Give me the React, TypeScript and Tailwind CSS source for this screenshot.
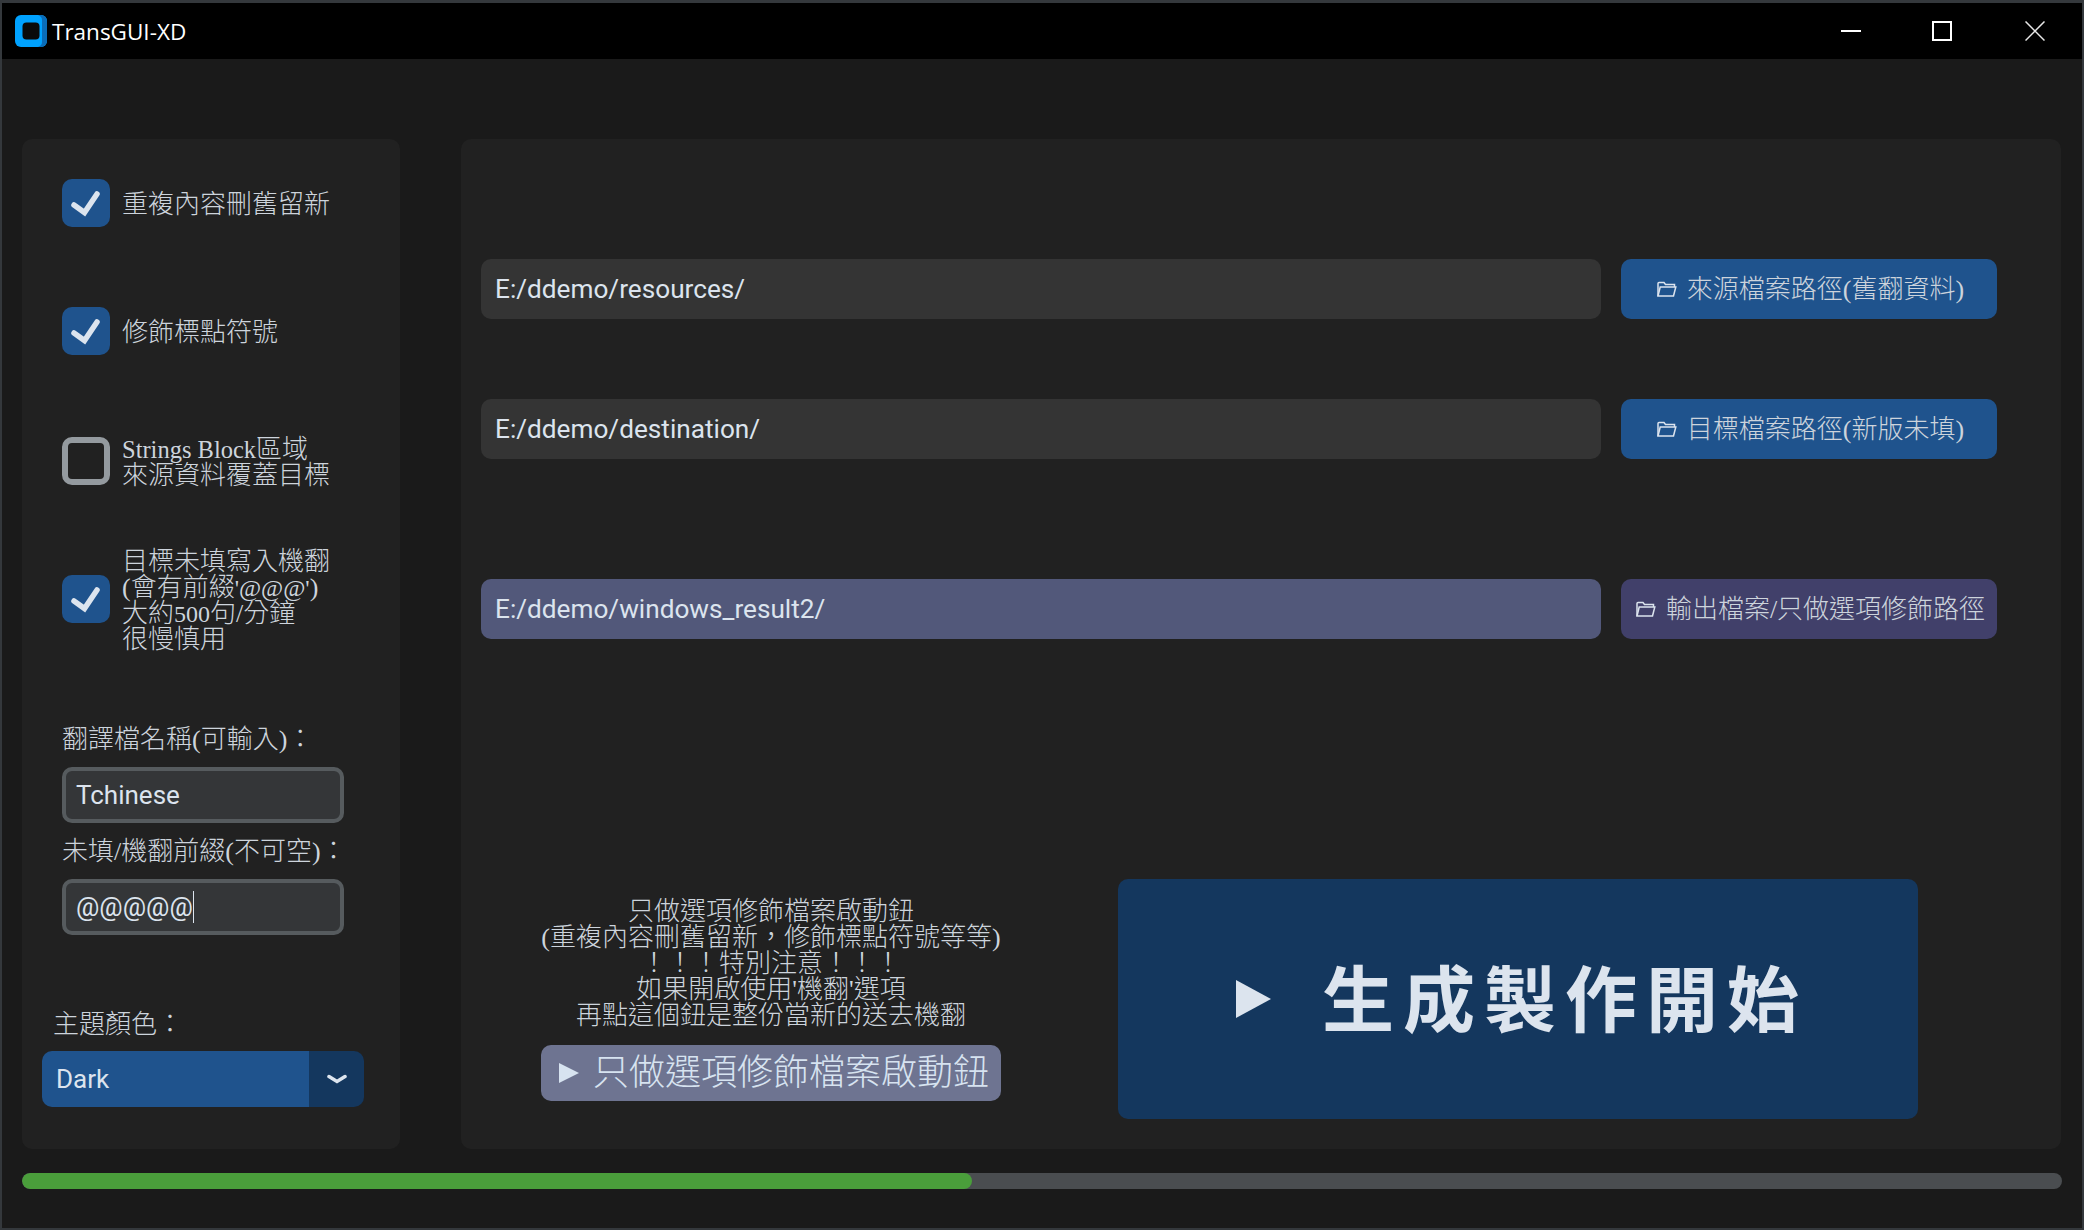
import type { ReactNode } from 'react'

const MING = "font-['Liberation_Serif','Noto_Sans_CJK_TC',serif] font-light"

function CheckBox({ checked }: { checked: boolean }) {
  if (!checked) {
    return <div className="w-[48px] h-[48px] shrink-0 rounded-[10px] border-[6px] border-[#949a9f]" />
  }
  return (
    <div className="w-[48px] h-[48px] shrink-0 rounded-[10px] bg-[#1f538d]">
      <svg width="48" height="48" viewBox="0 0 48 48" fill="none">
        <path d="M12 26l10.5 7.5L35 15" stroke="#dce4ee" strokeWidth="5.5" strokeLinecap="round" strokeLinejoin="miter" />
      </svg>
    </div>
  )
}

function Option({ checked, lines, className }: { checked: boolean; lines: ReactNode[]; className: string }) {
  return (
    <div className={`flex items-center gap-[12px] ${className}`}>
      <CheckBox checked={checked} />
      <div className={`${MING} pt-[2px] -mb-[2px] text-[26px] leading-[26px] text-[#cdd4dc] whitespace-nowrap`}>
        {lines.map((l, i) => (
          <div key={i}>{l}</div>
        ))}
      </div>
    </div>
  )
}

function FolderIcon() {
  return (
    <svg width="20" height="16" viewBox="0 0 20 16" fill="none" className="shrink-0" stroke="#dce4ee" strokeWidth="1.5">
      <path d="M1 15V2.5Q1 1.5 2 1.5H7L8.5 3.5H17.5V6" />
      <path d="M1 15H16.5L18.8 6H3.2L1 15Z" />
    </svg>
  )
}

function PathRow({ value, label, className, entryColor, buttonColor }: {
  value: string
  label: string
  className: string
  entryColor: string
  buttonColor: string
}) {
  return (
    <div className={`flex gap-[20px] pl-[20px] ${className}`}>
      <div className={`w-[1120px] h-[60px] rounded-[10px] flex items-center px-[14px] pt-[2px] font-['Roboto',sans-serif] text-[26.2px] text-[#dce4ee] ${entryColor}`}>
        {value}
      </div>
      <div className={`w-[376px] h-[60px] rounded-[10px] flex items-center justify-center gap-[10px] pl-[3px] ${MING} text-[26px] text-[#cdd4dc] whitespace-nowrap ${buttonColor}`}>
        <FolderIcon />
        {label}
      </div>
    </div>
  )
}

function TextBox({ value, caret }: { value: string; caret?: boolean }) {
  return (
    <div className="mt-[15px] ml-[40px] w-[282px] h-[56px] rounded-[10px] border-[4px] border-[#565b5e] bg-[#343638] flex items-center px-[10px] font-['Roboto',sans-serif] text-[26px] text-[#dce4ee]">
      {value}
      {caret && <span className="w-[1px] h-[32px] bg-[#dce4ee]" />}
    </div>
  )
}

export default function App() {
  return (
    <div lang="zh-TW" className="w-[2084px] h-[1230px] flex flex-col bg-[#1a1a1a] border-t-[3px] border-x-[2px] border-b-[2px] border-t-[#34383c] border-x-[#34383c] border-b-[#34383c] overflow-hidden">
      {/* Title bar */}
      <div className="h-[56px] shrink-0 bg-black flex items-center pl-[13px] pr-[37px]">
        <svg width="32" height="32" viewBox="0 0 32 32" className="shrink-0">
          <rect width="32" height="32" rx="6" fill="#00a2ff" />
          <path d="M23 0h3a6 6 0 0 1 6 6v20a6 6 0 0 1-6 6h-3c3-1 4-3 4-5V5c0-2-1-4-4-5z" fill="#0a6cb8" />
          <rect x="7.5" y="7.5" width="17" height="17" rx="4" fill="#0a0a0a" />
        </svg>
        <span className="ml-[5px] pt-[2px] font-['Open_Sans',sans-serif] text-[22.5px] text-white">TransGUI-XD</span>
        <div className="ml-auto flex items-center gap-[71px]">
          <svg width="20" height="20" viewBox="0 0 20 20"><path d="M0 10h20" stroke="#fff" strokeWidth="2" /></svg>
          <svg width="20" height="20" viewBox="0 0 20 20" className="mr-[2px]"><rect x="1" y="1" width="18" height="18" fill="none" stroke="#fff" strokeWidth="2" /></svg>
          <svg width="20" height="20" viewBox="0 0 20 20"><path d="M0.5 0.5l19 19M19.5 0.5l-19 19" stroke="#e8e8e8" strokeWidth="1.5" /></svg>
        </div>
      </div>

      <div className="flex gap-[61px] pl-[20px] pt-[80px]">
        {/* Left panel */}
        <div className="w-[378px] h-[1010px] rounded-[10px] bg-[#212121] flex flex-col">
          <Option className="ml-[40px] mt-[40px]" checked lines={['重複內容刪舊留新']} />
          <Option className="ml-[40px] mt-[80px]" checked lines={['修飾標點符號']} />
          <Option
            className="ml-[40px] mt-[80px]"
            checked={false}
            lines={[<><span className="text-[24.5px]">Strings Block</span>區域</>, '來源資料覆蓋目標']}
          />
          <Option
            className="ml-[40px] mt-[60px]"
            checked
            lines={[
              '目標未填寫入機翻',
              <>(會有前綴<span className="text-[24px]">'@@@'</span>)</>,
              <>大約<span className="text-[24px]">500</span>句/分鐘</>,
              '很慢慎用',
            ]}
          />

          <div className={`ml-[40px] mt-[76px] -mb-[1px] ${MING} text-[26px] leading-[26px] text-[#cdd4dc]`}>翻譯檔名稱(可輸入)：</div>
          <TextBox value="Tchinese" />
          <div className={`ml-[40px] mt-[16px] -mb-[1px] ${MING} text-[26px] leading-[26px] text-[#cdd4dc]`}>未填/機翻前綴(不可空)：</div>
          <TextBox value="@@@@@" caret />

          <div className={`ml-[31px] mt-[77px] ${MING} text-[26px] leading-[26px] text-[#cdd4dc]`}>主題顏色：</div>
          <div className="mt-[13px] ml-[20px] w-[322px] h-[56px] rounded-[10px] overflow-hidden flex">
            <div className="w-[267px] bg-[#1f538d] flex items-center pl-[14px] font-['Roboto',sans-serif] text-[26px] text-[#dce4ee]">Dark</div>
            <div className="flex-1 bg-[#14375e] flex items-center justify-center">
              <svg width="20" height="12" viewBox="0 0 20 12" fill="none">
                <path d="M2 3.5l8 5 8-5" stroke="#dce4ee" strokeWidth="3.5" strokeLinecap="round" />
              </svg>
            </div>
          </div>
        </div>

        {/* Right panel */}
        <div className="w-[1600px] h-[1010px] rounded-[10px] bg-[#212121] flex flex-col">
          <PathRow className="mt-[120px]" value="E:/ddemo/resources/" label="來源檔案路徑(舊翻資料)" entryColor="bg-[#343434]" buttonColor="bg-[#1f538d]" />
          <PathRow className="mt-[80px]" value="E:/ddemo/destination/" label="目標檔案路徑(新版未填)" entryColor="bg-[#343434]" buttonColor="bg-[#1f538d]" />
          <PathRow className="mt-[120px]" value="E:/ddemo/windows_result2/" label="輸出檔案/只做選項修飾路徑" entryColor="bg-[#52587a]" buttonColor="bg-[#41406a]" />

          <div className="flex mt-[240px] pl-[80px] gap-[117px]">
            <div className="w-[460px] pt-[20px] flex flex-col">
              <div className={`${MING} text-[26px] leading-[26px] text-[#cdd4dc] text-center whitespace-nowrap`}>
                <div>只做選項修飾檔案啟動鈕</div>
                <div>(重複內容刪舊留新，修飾標點符號等等)</div>
                <div>！！！特別注意！！！</div>
                <div>如果開啟使用'機翻'選項</div>
                <div>再點這個鈕是整份當新的送去機翻</div>
              </div>
              <div className={`mt-[16px] h-[56px] rounded-[10px] bg-[#6e7491] flex items-center gap-[14px] pl-[18px] ${MING} text-[36px] text-[#d7e3f0] whitespace-nowrap`}>
                <svg width="20" height="20" viewBox="0 0 20 20" className="shrink-0"><path d="M0 0l20 10L0 20z" fill="#d7e3f0" /></svg>
                只做選項修飾檔案啟動鈕
              </div>
            </div>
            <div className="w-[800px] h-[240px] rounded-[10px] bg-[#14375e] flex items-center justify-center gap-[51px] pl-[8px] font-['Noto_Sans_CJK_TC',sans-serif] font-bold text-[72px] tracking-[9px] text-[#dce4ee] whitespace-nowrap">
              <svg width="35" height="38" viewBox="0 0 35 38" className="shrink-0"><path d="M0 0l35 19L0 38z" fill="#dce4ee" /></svg>
              <span className="pb-[8px]">生成製作開始</span>
            </div>
          </div>
        </div>
      </div>

      {/* Progress */}
      <div className="mt-[24px] ml-[20px] w-[2040px] h-[16px] rounded-full bg-[#4a4d50] overflow-hidden">
        <div className="w-[950px] h-full rounded-full bg-[#4a9e3b]" />
      </div>
    </div>
  )
}
